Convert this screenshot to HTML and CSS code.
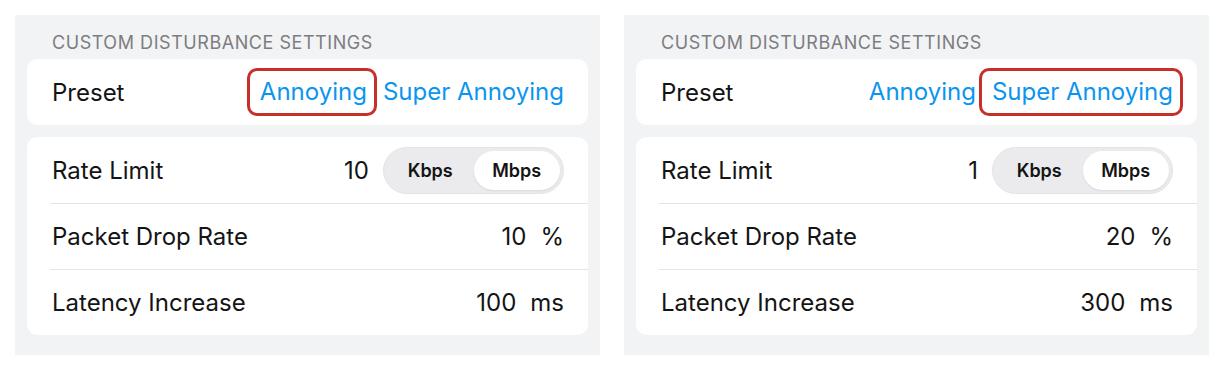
FILE: index.html
```html
<!DOCTYPE html>
<html lang="en">

<head>
    <meta charset="UTF-8">
    <meta name="viewport" content="width=device-width, initial-scale=1.0">
    <title>Custom Disturbance Settings</title>
    <link rel="stylesheet" href="styles.css">
</head>

<body>
    <div class="panel">
        <div class="section-title">CUSTOM DISTURBANCE SETTINGS</div>
        <div class="card">
            <div class="row">
                <span class="label">Preset</span>
                <div class="presets">
                    <span class="preset picked">Annoying</span>
                    <span class="preset">Super Annoying</span>
                </div>
            </div>
        </div>
        <div class="card">
            <div class="row">
                <span class="label">Rate Limit</span>
                <div class="value">
                    <span class="num">10</span>
                    <div class="segmented">
                        <span class="seg">Kbps</span>
                        <span class="seg active">Mbps</span>
                    </div>
                </div>
            </div>
            <div class="row">
                <span class="label">Packet Drop Rate</span>
                <div class="value">
                    <span class="num">10</span>
                    <span class="unit">%</span>
                </div>
            </div>
            <div class="row">
                <span class="label">Latency Increase</span>
                <div class="value">
                    <span class="num">100</span>
                    <span class="unit">ms</span>
                </div>
            </div>
        </div>
    </div>

    <div class="panel">
        <div class="section-title">CUSTOM DISTURBANCE SETTINGS</div>
        <div class="card">
            <div class="row">
                <span class="label">Preset</span>
                <div class="presets">
                    <span class="preset">Annoying</span>
                    <span class="preset picked">Super Annoying</span>
                </div>
            </div>
        </div>
        <div class="card">
            <div class="row">
                <span class="label">Rate Limit</span>
                <div class="value">
                    <span class="num">1</span>
                    <div class="segmented">
                        <span class="seg">Kbps</span>
                        <span class="seg active">Mbps</span>
                    </div>
                </div>
            </div>
            <div class="row">
                <span class="label">Packet Drop Rate</span>
                <div class="value">
                    <span class="num">20</span>
                    <span class="unit">%</span>
                </div>
            </div>
            <div class="row">
                <span class="label">Latency Increase</span>
                <div class="value">
                    <span class="num">300</span>
                    <span class="unit">ms</span>
                </div>
            </div>
        </div>
    </div>
</body>

</html>
```

FILE: styles.css
```css
body {
    font-family: Inter, "Noto Sans", sans-serif;
    background-color: #ffffff;
    margin: 0;
    padding: 15px;
    display: flex;
    gap: 24px;
    color: #141414;
}

.panel {
    flex: 1;
    height: 340px;
    box-sizing: border-box;
    background-color: #f2f3f5;
    padding: 18px 12px 20px;
}

.section-title {
    font-size: 18px;
    line-height: 20px;
    color: #7d7d80;
    padding-left: 25px;
    margin-bottom: 6px;
    letter-spacing: 0.55px;
}

.card {
    background: white;
    border-radius: 11px;
    padding-left: 23px;
    margin-bottom: 12px;
}

.row {
    display: flex;
    align-items: center;
    justify-content: space-between;
    height: 66px;
    box-sizing: border-box;
    padding: 0 24px 0 2px;
    font-size: 24px;
}

.row + .row {
    border-top: 1px solid #e2e5ec;
}

.presets {
    display: flex;
    gap: 16px;
    color: #0b95ef;
}

.preset {
    position: relative;
    line-height: 30px;
}

/* red highlight drawn over the chosen preset */
.preset.picked::after {
    content: "";
    position: absolute;
    left: -13px;
    right: -10px;
    top: -9px;
    bottom: -9px;
    border: 3px solid #c6302b;
    border-radius: 10px;
}

.value {
    display: flex;
    align-items: center;
    gap: 14px;
}

.segmented {
    display: flex;
    width: 181px;
    height: 47px;
    box-sizing: border-box;
    padding: 3px;
    background: #ebebed;
    border: 1px solid #e4e4e7;
    border-radius: 24px;
}

.seg {
    flex: 1;
    display: flex;
    align-items: center;
    justify-content: center;
    font-size: 18px;
    font-weight: 600;
    border-radius: 20px;
}

.seg.active {
    background: white;
    box-shadow: 0 1px 2px rgba(0, 0, 0, 0.08);
}
```
